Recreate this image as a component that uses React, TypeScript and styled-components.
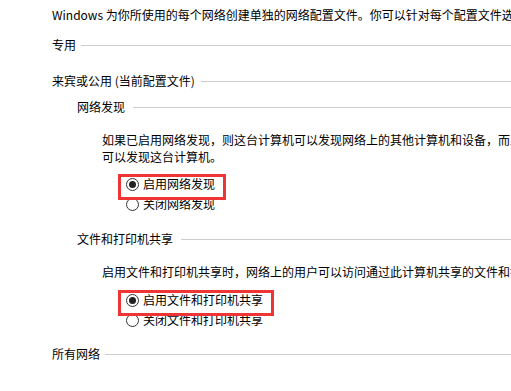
import React from "react";
import styled, { createGlobalStyle } from "styled-components";

const Global = createGlobalStyle`
  html, body {
    margin: 0;
    padding: 0;
    background: #ffffff;
    overflow: hidden;
  }
  body {
    font-family: "Noto Sans CJK SC", "Noto Sans", sans-serif;
    font-size: 12px;
    line-height: 17px;
    color: #000000;
  }
`;

const Page = styled.div`
  width: 511px;
  height: 391px;
  overflow: hidden;
  background: #ffffff;
  padding-top: 6px;
  box-sizing: border-box;
  display: flex;
  flex-direction: column;
`;

const Intro = styled.div`
  padding-left: 52px;
  white-space: nowrap;
  overflow: hidden;
`;

const Header = styled.div<{ $indent: number; $gap: number; $top: number }>`
  display: flex;
  align-items: center;
  gap: ${(p) => p.$gap}px;
  margin-top: ${(p) => p.$top}px;
  padding-left: ${(p) => p.$indent}px;
  white-space: nowrap;
`;

const Rule = styled.div`
  flex: 1;
  height: 1px;
  background: #cccccc;
  margin-top: 1px;
`;

const Para = styled.p<{ $top: number }>`
  margin: ${(p) => p.$top}px 0 0 102px;
  width: 520px;
  flex-shrink: 0;
`;

const RadioGroup = styled.div<{ $top: number }>`
  margin-top: ${(p) => p.$top}px;
  padding-left: 126px;
  display: flex;
  flex-direction: column;
  align-items: flex-start;
`;

const RadioRow = styled.label<{ $marked?: boolean }>`
  position: relative;
  display: inline-flex;
  align-items: center;
  gap: 4px;
  height: 20px;
  line-height: 20px;
  white-space: nowrap;
  ${(p) =>
    p.$marked
      ? `
    z-index: 1;
    &::after {
      content: "";
      position: absolute;
      left: -8px;
      right: -11px;
      top: 0;
      bottom: -6px;
      border: 3px solid #ee3434;
      pointer-events: none;
    }
  `
      : ""}
`;

const Radio = styled.span<{ $checked?: boolean }>`
  width: 13px;
  height: 13px;
  box-sizing: border-box;
  border: 1px solid #333333;
  border-radius: 50%;
  background: #ffffff;
  display: flex;
  align-items: center;
  justify-content: center;
  flex-shrink: 0;
  &::after {
    content: "";
    width: 7px;
    height: 7px;
    border-radius: 50%;
    background: ${(p) => (p.$checked ? "#222222" : "transparent")};
  }
`;

export default function App() {
  return (
    <>
      <Global />
      <Page>
        <Intro>
          Windows 为你所使用的每个网络创建单独的网络配置文件。你可以针对每个配置文件选择特定的选项。
        </Intro>

        <Header $indent={52} $gap={5} $top={13}>
          <span>专用</span>
          <Rule />
        </Header>

        <Header $indent={52} $gap={6} $top={19}>
          <span>来宾或公用 (当前配置文件)</span>
          <Rule />
        </Header>

        <Header $indent={77} $gap={8} $top={9}>
          <span>网络发现</span>
          <Rule />
        </Header>

        <Para $top={16}>
          如果已启用网络发现，则这台计算机可以发现网络上的其他计算机和设备，而且其他网络计算机也可以发现这台计算机。
        </Para>

        <RadioGroup $top={9}>
          <RadioRow $marked>
            <Radio $checked />
            启用网络发现
          </RadioRow>
          <RadioRow>
            <Radio />
            关闭网络发现
          </RadioRow>
        </RadioGroup>

        <Header $indent={77} $gap={8} $top={16}>
          <span>文件和打印机共享</span>
          <Rule />
        </Header>

        <Para $top={16}>
          启用文件和打印机共享时，网络上的用户可以访问通过此计算机共享的文件和打印机。
        </Para>

        <RadioGroup $top={10}>
          <RadioRow $marked>
            <Radio $checked />
            启用文件和打印机共享
          </RadioRow>
          <RadioRow>
            <Radio />
            关闭文件和打印机共享
          </RadioRow>
        </RadioGroup>

        <Header $indent={52} $gap={5} $top={15}>
          <span>所有网络</span>
          <Rule />
        </Header>
      </Page>
    </>
  );
}
